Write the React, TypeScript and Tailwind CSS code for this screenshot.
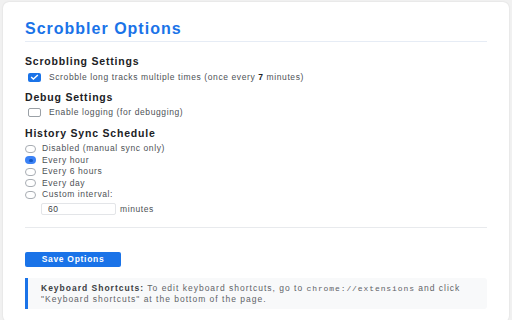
import React, { useState } from 'react';

const options = [
  { value: 'disabled', label: 'Disabled (manual sync only)' },
  { value: 'hourly', label: 'Every hour' },
  { value: '6h', label: 'Every 6 hours' },
  { value: 'daily', label: 'Every day' },
  { value: 'custom', label: 'Custom interval:' },
];

const Checkbox: React.FC<{ checked: boolean; onChange: () => void }> = ({ checked, onChange }) => (
  <button
    type="button"
    onClick={onChange}
    className={
      checked
        ? 'flex h-[9px] w-[13px] shrink-0 items-center justify-center rounded-[2px] bg-[#1a73e8]'
        : 'h-[9px] w-[13px] shrink-0 rounded-[2px] border border-[#9aa0a6] bg-white'
    }
  >
    {checked && (
      <svg viewBox="0 0 12 8" className="h-[6px] w-[9px]">
        <path d="M1.5 4 L4.5 6.8 L10.5 1.2" fill="none" stroke="white" strokeWidth="1.8" />
      </svg>
    )}
  </button>
);

const Radio: React.FC<{ checked: boolean }> = ({ checked }) =>
  checked ? (
    <span className="flex h-[8px] w-[11px] shrink-0 items-center justify-center rounded-full bg-[#3b82f6]">
      <span className="h-[3px] w-[4px] rounded-full bg-[#1557c0]" />
    </span>
  ) : (
    <span className="h-[8px] w-[11px] shrink-0 rounded-full border border-[#a8adb3] bg-white" />
  );

export default function App() {
  const [multi, setMulti] = useState(true);
  const [debug, setDebug] = useState(false);
  const [sync, setSync] = useState('hourly');
  const [interval, setInterval] = useState('60');

  return (
    <div className="h-[320px] w-[512px] overflow-hidden bg-[#f1f1f1] pl-[3px] pr-[3px] pt-[2px] font-['Liberation_Sans',Arial,sans-serif]">
      <div className="h-[320px] rounded-[6px] bg-white pl-[22px] pr-[22px] pt-[17px] shadow-[0_0_2px_rgba(0,0,0,0.12)]">
        <div className="border-b border-[#e6ecf5] pb-[2px]">
          <h1 className="text-[16px] font-bold leading-[20px] tracking-[1px] text-[#1a73e8]">Scrobbler Options</h1>
        </div>

        <h2 className="mt-[12px] text-[10.5px] font-bold leading-[14px] tracking-[0.8px] text-[#202124]">Scrobbling Settings</h2>
        <label className="mt-[3px] flex h-[12px] items-center gap-[8px] pl-[3px] text-[8.5px] tracking-[0.6px] text-[#4d5156]">
          <Checkbox checked={multi} onChange={() => setMulti(!multi)} />
          <span>Scrobble long tracks multiple times (once every <b className="text-[#202124]">7</b> minutes)</span>
        </label>

        <h2 className="mt-[7px] text-[10.5px] font-bold leading-[14px] tracking-[0.8px] text-[#202124]">Debug Settings</h2>
        <label className="mt-[2px] flex h-[12px] items-center gap-[8px] pl-[3px] text-[8.5px] tracking-[0.6px] text-[#4d5156]">
          <Checkbox checked={debug} onChange={() => setDebug(!debug)} />
          <span>Enable logging (for debugging)</span>
        </label>

        <h2 className="mt-[8px] text-[10.5px] font-bold leading-[14px] tracking-[0.8px] text-[#202124]">History Sync Schedule</h2>
        <div className="mt-[3px] flex flex-col">
          {options.map((o) => (
            <label
              key={o.value}
              onClick={() => setSync(o.value)}
              className="flex h-[11.5px] items-center gap-[6px] text-[8.5px] tracking-[0.6px] text-[#4d5156]"
            >
              <Radio checked={sync === o.value} />
              <span>{o.label}</span>
            </label>
          ))}
        </div>
        <div className="mt-[2px] flex items-center gap-[4px] pl-[16px] text-[8.5px] tracking-[0.6px] text-[#4d5156]">
          <input
            value={interval}
            onChange={(e) => setInterval(e.target.value)}
            className="h-[12px] w-[75px] rounded-[2px] border border-[#e3e5e8] px-[6px] text-[8.5px] tracking-[0.6px] text-[#3c4043] outline-none"
          />
          <span>minutes</span>
        </div>

        <div className="mt-[12px] border-b border-[#e8eaed]" />

        <button className="mt-[24px] h-[15px] w-[96px] rounded-[2px] bg-[#1a73e8] text-[8.5px] font-bold tracking-[0.7px] text-white">
          Save Options
        </button>

        <div className="mt-[9px] rounded-r-[3px] border-l-[3px] border-[#1a73e8] bg-[#f8f9fa] py-[5px] pl-[13px] pr-[8px] text-[8.5px] leading-[10px] tracking-[1px] text-[#5f6368]">
          <b className="text-[#3c4043]">Keyboard Shortcuts:</b> To edit keyboard shortcuts, go to{' '}
          <span className="font-['Liberation_Mono',monospace] text-[8px] tracking-[0.9px]">chrome://extensions</span> and click
          <br />
          "Keyboard shortcuts" at the bottom of the page.
        </div>
      </div>
    </div>
  );
}
